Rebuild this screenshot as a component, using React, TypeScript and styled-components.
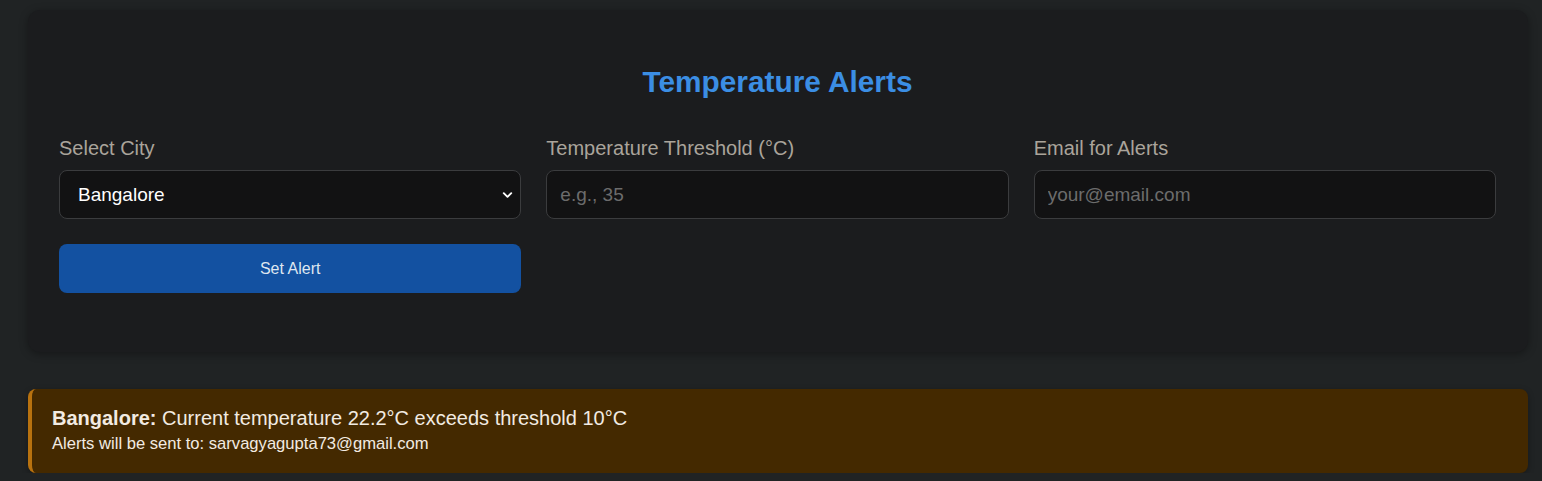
import React, { useState } from 'react';
import styled, { createGlobalStyle } from 'styled-components';
import { ChevronDown } from 'lucide-react';

const pageBg = '#202324';
const cardBg = '#1b1c1e';
const fieldBg = '#121213';
const fieldBorder = '#3b3c3e';
const blue = '#3b8ee4';
const labelGrey = '#aaa49b';

const GlobalStyle = createGlobalStyle`
  body {
    margin: 0;
    background: ${pageBg};
    font-family: "Liberation Sans", Arial, sans-serif;
  }
`;

const cities = ['Bangalore', 'Delhi', 'Mumbai', 'Chennai', 'Kolkata', 'Hyderabad'];

const App = () => {
  const [city, setCity] = useState('Bangalore');

  return (
    <>
      <GlobalStyle />
      <Page>
        <Card>
          <Title>Temperature Alerts</Title>
          <Form>
            <Field>
              <Label>Select City</Label>
              <SelectWrap>
                <Select value={city} onChange={(e) => setCity(e.target.value)}>
                  {cities.map((c) => (
                    <option key={c}>{c}</option>
                  ))}
                </Select>
                <Chevron>
                  <ChevronDown size={15} strokeWidth={3} />
                </Chevron>
              </SelectWrap>
            </Field>
            <Field>
              <Label>Temperature Threshold (°C)</Label>
              <Input type='number' placeholder='e.g., 35' />
            </Field>
            <Field>
              <Label>Email for Alerts</Label>
              <Input type='email' placeholder='your@email.com' />
            </Field>
            <Button>Set Alert</Button>
          </Form>
        </Card>

        <Alert>
          <AlertLine>
            <strong>Bangalore:</strong> Current temperature 22.2°C exceeds
            threshold 10°C
          </AlertLine>
          <AlertNote>Alerts will be sent to: sarvagyagupta73@gmail.com</AlertNote>
        </Alert>
      </Page>
    </>
  );
};

export default App;

const Page = styled.div`
  width: 1500px;
  padding: 10px 0 0 28px;
  display: flex;
  flex-direction: column;
  gap: 37px;
`;

const Card = styled.div`
  background-color: ${cardBg};
  border-radius: 12px;
  padding: 32px 32px 59px 31px;
  box-shadow: 0 2px 8px rgba(0, 0, 0, 0.35);
`;

const Title = styled.h2`
  margin: 23px 0 38px;
  text-align: center;
  color: ${blue};
  font-size: 29.8px;
  line-height: 34px;
  font-weight: 700;
`;

const Form = styled.div`
  display: grid;
  grid-template-columns: repeat(3, 1fr);
  gap: 25px;
`;

const Field = styled.div`
  display: flex;
  flex-direction: column;
  gap: 10px;
`;

const Label = styled.label`
  color: ${labelGrey};
  font-size: 20px;
  line-height: 23px;
`;

const fieldStyles = `
  box-sizing: border-box;
  width: 100%;
  height: 49px;
  background-color: ${fieldBg};
  border: 1px solid ${fieldBorder};
  border-radius: 8px;
  font-family: "Liberation Sans", Arial, sans-serif;
  font-size: 19px;
  outline: none;
`;

const SelectWrap = styled.div`
  position: relative;
`;

const Select = styled.select`
  ${fieldStyles}
  appearance: none;
  padding: 0 40px 0 18px;
  color: #ffffff;
`;

const Chevron = styled.span`
  position: absolute;
  right: 6px;
  top: 50%;
  transform: translateY(-50%);
  display: flex;
  color: #ffffff;
  pointer-events: none;
`;

const Input = styled.input`
  ${fieldStyles}
  padding: 0 13px;
  color: #ffffff;
  &::placeholder {
    color: #6c6c6c;
  }
  &::-webkit-outer-spin-button,
  &::-webkit-inner-spin-button {
    -webkit-appearance: none;
    margin: 0;
  }
`;

const Button = styled.button`
  grid-column: 1;
  height: 49px;
  border: none;
  border-radius: 8px;
  background-color: #1351a1;
  color: #dfe6f0;
  font-family: "Liberation Sans", Arial, sans-serif;
  font-size: 16px;
  cursor: pointer;
`;

const Alert = styled.div`
  background-color: #442900;
  border-left: 4px solid #b8720f;
  border-radius: 8px;
  padding: 18px 20px 20px;
  box-shadow: 0 2px 6px rgba(0, 0, 0, 0.3);
  color: #f2ebe2;
`;

const AlertLine = styled.div`
  font-size: 20px;
  line-height: 23px;
`;

const AlertNote = styled.div`
  margin-top: 5px;
  font-size: 16.6px;
  line-height: 18px;
`;
